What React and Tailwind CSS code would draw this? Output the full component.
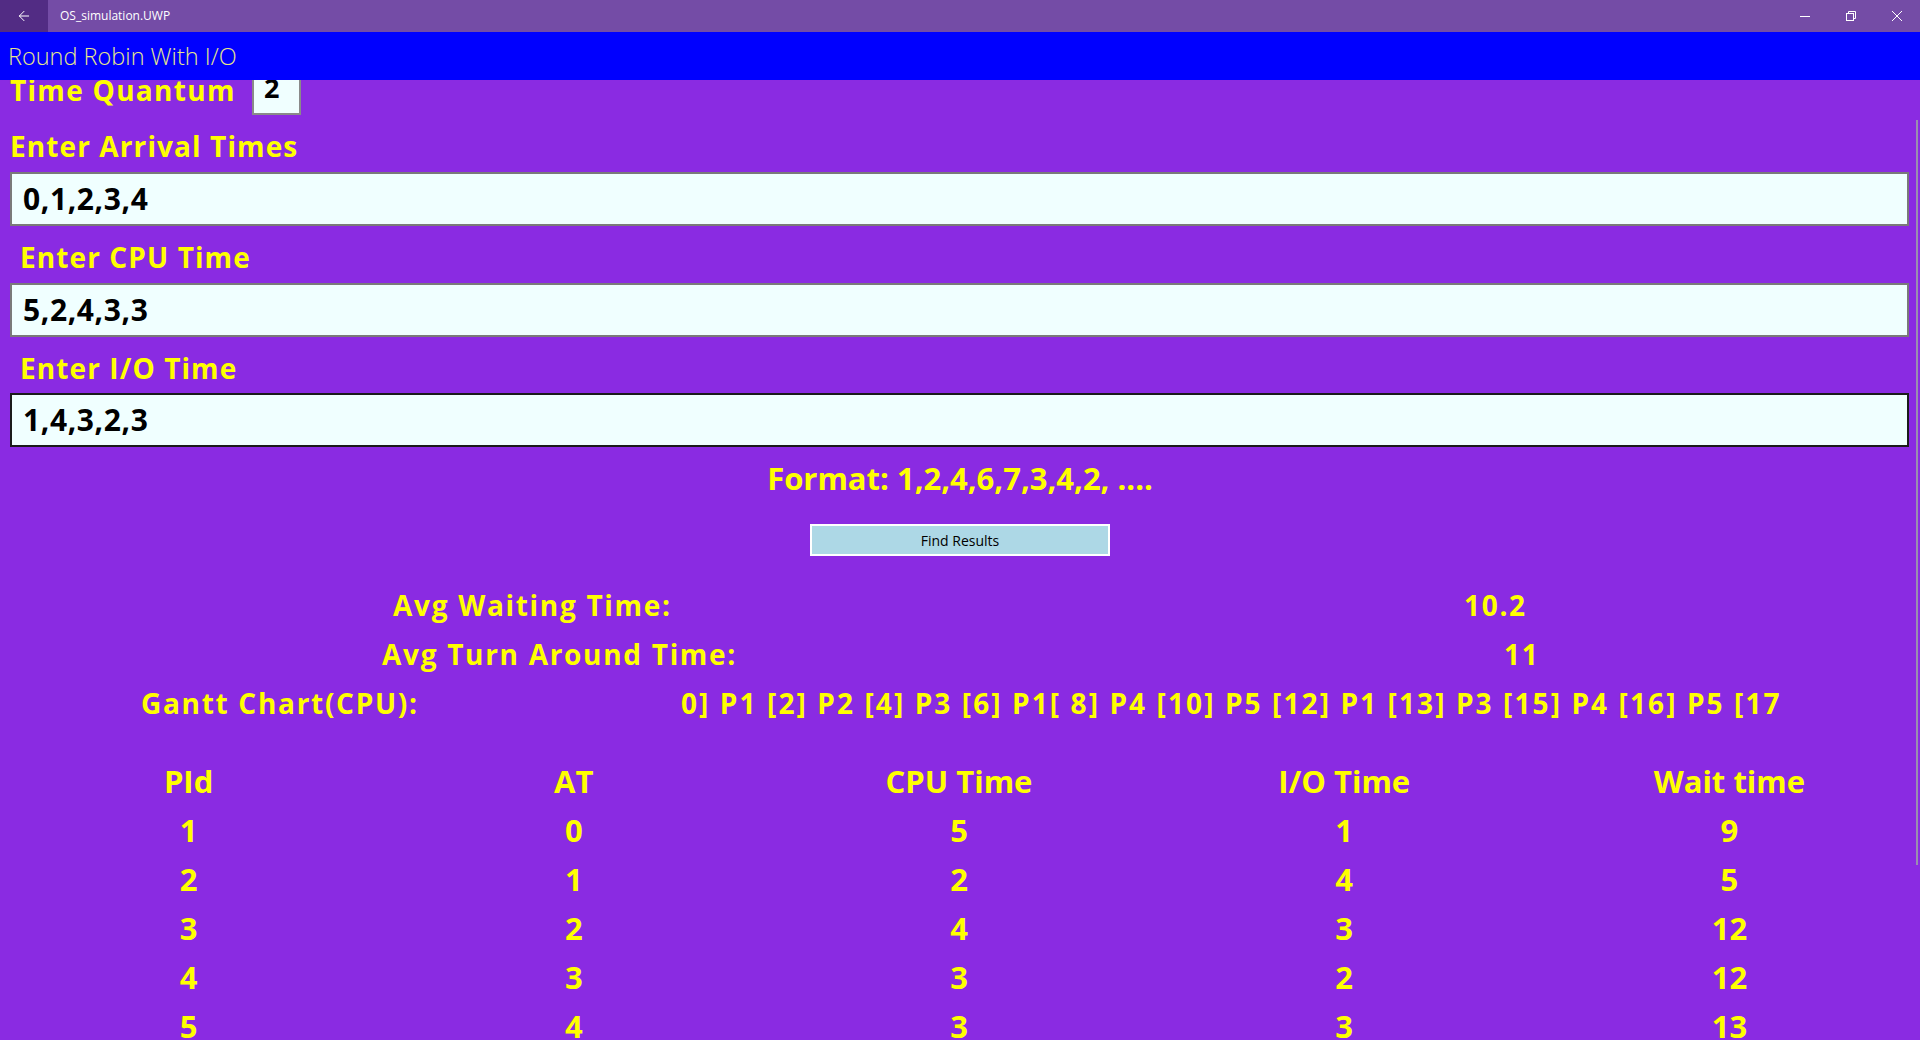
import { ArrowLeft } from 'lucide-react';

const font = { fontFamily: '"Open Sans", "Noto Sans", sans-serif' };

const rows = [
  ['1', '0', '5', '1', '9'],
  ['2', '1', '2', '4', '5'],
  ['3', '2', '4', '3', '12'],
  ['4', '3', '3', '2', '12'],
  ['5', '4', '3', '3', '13'],
];

function TitleBar() {
  return (
    <div className="flex h-[32px] items-center bg-[#744ca6] text-white">
      <div className="flex h-full w-[48px] items-center justify-center bg-[#522c84]">
        <ArrowLeft className="h-4 w-4" strokeWidth={1.5} />
      </div>
      <div className="pl-3 text-[12px]">OS_simulation.UWP</div>
      <div className="ml-auto flex h-full">
        <div className="flex w-[46px] items-center justify-center">
          <svg width="10" height="10" viewBox="0 0 10 10">
            <path d="M0 5.5h10" stroke="white" strokeWidth="1" />
          </svg>
        </div>
        <div className="flex w-[46px] items-center justify-center">
          <svg width="10" height="10" viewBox="0 0 10 10" fill="none" stroke="white" strokeWidth="1">
            <rect x="0.5" y="2.5" width="7" height="7" />
            <path d="M2.5 2.5V0.5h7v7h-2" />
          </svg>
        </div>
        <div className="flex w-[46px] items-center justify-center">
          <svg width="10" height="10" viewBox="0 0 10 10">
            <path d="M0 0l10 10M10 0L0 10" stroke="white" strokeWidth="1" />
          </svg>
        </div>
      </div>
    </div>
  );
}

function Field({ value, dark }) {
  return (
    <div
      className={`mx-[10px] mr-[11px] flex h-[54px] items-center border-2 bg-[#f0ffff] pl-[11px] text-[30px] font-bold leading-none tracking-[0.6px] text-black ${
        dark ? 'border-[#1b1b1b]' : 'border-[#7a7a7a]'
      }`}
    >
      {value}
    </div>
  );
}

export default function App() {
  return (
    <div className="flex h-[1040px] w-[1920px] flex-col overflow-hidden bg-[#8a2be2]" style={font}>
      <TitleBar />
      <div className="flex h-[48px] items-center bg-[#0000ff] pl-[8px] pt-[2px] text-[23.5px] font-light leading-none text-[#e6e68a]">
        Round Robin With I/O
      </div>

      <div className="relative flex-1 overflow-hidden text-[#ffff00]">
        <div className="absolute right-[2px] top-[40px] h-[745px] w-[2px] bg-[#9a8fae]" />

        <div className="flex h-[35px] items-start pl-[10px]">
          <div className="flex h-[19px] w-[242px] items-center text-[28px] font-bold leading-none tracking-[1.3px]">
            Time Quantum
          </div>
          <div className="flex h-[35px] w-[49px] items-end border-2 border-t-0 border-[#8a8a8a] bg-[#f0ffff] pb-[12px] pl-[10px] text-[27px] font-bold leading-none text-black">
            2
          </div>
        </div>

        <div className="flex h-[57px] items-center pl-[10px] pt-[4px] text-[28px] font-bold leading-none tracking-[1.1px]">
          Enter Arrival Times
        </div>
        <Field value="0,1,2,3,4" />

        <div className="flex h-[57px] items-center pl-[20px] pt-[4px] text-[28px] font-bold leading-none tracking-[1.1px]">
          Enter CPU Time
        </div>
        <Field value="5,2,4,3,3" />

        <div className="flex h-[56px] items-center pl-[20px] pt-[6px] text-[28px] font-bold leading-none tracking-[1.1px]">
          Enter I/O Time
        </div>
        <Field value="1,4,3,2,3" dark />

        <div className="mt-[1px] flex h-[60px] items-center justify-center text-[31px] font-bold leading-none">
          Format: 1,2,4,6,7,3,4,2, ....
        </div>

        <div className="mx-auto mt-[16px] flex h-[32px] w-[300px] items-center justify-center border-2 border-white bg-[#add8e6] text-[14px] text-black">
          Find Results
        </div>

        <div className="mt-[24px] text-[28px] font-bold leading-none">
          <div className="flex h-[49px] items-center">
            <span className="w-[1464px] pl-[393px] tracking-[1.7px]">Avg Waiting Time:</span>
            <span className="tracking-[1.7px]">10.2</span>
          </div>
          <div className="flex h-[49px] items-center">
            <span className="w-[1504px] pl-[382px] tracking-[1.7px]">Avg Turn Around Time:</span>
            <span className="tracking-[1.7px]">11</span>
          </div>
          <div className="flex h-[49px] items-center">
            <span className="w-[681px] pl-[141px] tracking-[1.7px]">Gantt Chart(CPU):</span>
            <span className="tracking-[2.1px]">
              0] P1 [2] P2 [4] P3 [6] P1[ 8] P4 [10] P5 [12] P1 [13] P3 [15] P4 [16] P5 [17
            </span>
          </div>
        </div>

        <div className="-ml-[4px] mt-[30px] w-[1926px] text-[31px] font-bold leading-none">
          <div className="grid h-[49px] grid-cols-5 items-center text-center">
            <span>PId</span>
            <span>AT</span>
            <span>CPU Time</span>
            <span>I/O Time</span>
            <span>Wait time</span>
          </div>
          {rows.map((r) => (
            <div key={r[0]} className="grid h-[49px] grid-cols-5 items-center text-center">
              {r.map((c, i) => (
                <span key={i}>{c}</span>
              ))}
            </div>
          ))}
        </div>
      </div>
    </div>
  );
}
